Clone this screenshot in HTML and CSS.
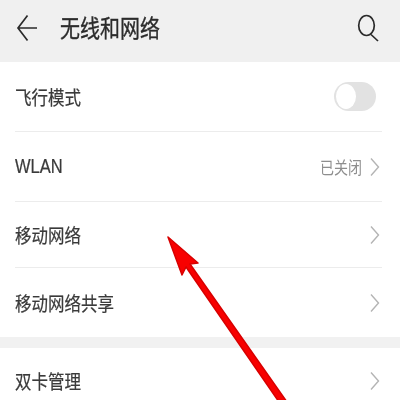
FILE: index.html
```html
<!DOCTYPE HTML>
<html>
<head>
<meta charset="UTF-8">
<title>无线和网络</title>
<link rel="stylesheet" href="styles.css">
</head>
<body>

<div class="header">
	<svg class="back-icon" width="22" height="28" viewBox="0 0 22 28">
		<path d="M11.5 1.5 L2 14 L11.5 26.5 M2 14 H21" fill="none" stroke="#2a2a2a" stroke-width="1.7"/>
	</svg>
	<h1 class="title">无线和网络</h1>
	<svg class="search-icon" width="23" height="28" viewBox="0 0 23 28">
		<ellipse cx="9.5" cy="11.5" rx="7.8" ry="10" fill="none" stroke="#2a2a2a" stroke-width="1.7"/>
		<path d="M14 20.5 L21 27" fill="none" stroke="#2a2a2a" stroke-width="1.7"/>
	</svg>
</div>

<div class="group">
	<div class="row row-first">
		<span class="label">飞行模式</span>
		<span class="switch"><span class="knob"></span></span>
	</div>
	<div class="row row-wlan">
		<span class="label">WLAN</span>
		<span class="value">已关闭</span>
		<svg class="chevron" width="10" height="20" viewBox="0 0 10 20"><path d="M1 1.5 L8.5 10 L1 18.5" fill="none" stroke="#b4b4b4" stroke-width="1.4"/></svg>
	</div>
	<div class="row row-mobile">
		<span class="label">移动网络</span>
		<svg class="chevron" width="10" height="20" viewBox="0 0 10 20"><path d="M1 1.5 L8.5 10 L1 18.5" fill="none" stroke="#b4b4b4" stroke-width="1.4"/></svg>
	</div>
	<div class="row row-share">
		<span class="label">移动网络共享</span>
		<svg class="chevron" width="10" height="20" viewBox="0 0 10 20"><path d="M1 1.5 L8.5 10 L1 18.5" fill="none" stroke="#b4b4b4" stroke-width="1.4"/></svg>
	</div>
</div>

<div class="group-gap"></div>

<div class="group">
	<div class="row row-last">
		<span class="label">双卡管理</span>
		<svg class="chevron" width="10" height="20" viewBox="0 0 10 20"><path d="M1 1.5 L8.5 10 L1 18.5" fill="none" stroke="#b4b4b4" stroke-width="1.4"/></svg>
	</div>
</div>

<!-- Red arrow drawn over the list -->
<svg class="arrow" width="400" height="400" viewBox="0 0 400 400">
	<path d="M168 237 L198 263 L190 264 L287 402 L279 402 L186 267 L182 275 Z" fill="#f80000" stroke="#d80000" stroke-width="1.5" stroke-linejoin="round"/>
</svg>

</body>
</html>
```

FILE: styles.css
```css
/* *** Layout *** */
html, body {
	margin: 0;
	height: 400px;
	overflow: hidden;
	background-color: #fff;
	font-family: "Liberation Sans", "Noto Sans CJK SC", sans-serif;
}

.header {
	display: flex;
	align-items: center;
	height: 62px;
	padding: 0 20px 7px 16px;
	box-sizing: border-box;
	background-color: #f0f0f0;
}

.group {
	padding: 0 18px 0 15px;
}

.group-gap {
	height: 11px;
	background-color: #f1f1f1;
}

.row {
	display: flex;
	align-items: center;
	border-bottom: 1px solid #ececec;
	box-sizing: border-box;
}

.row-first { height: 70px; }
.row-wlan { height: 70px; }
.row-mobile { height: 66px; }
.row-share { height: 69px; border-bottom: none; }
.row-last { height: 66px; border-bottom: none; }

/* *** Text *** */
/* The screenshot is stretched vertically, so the text is too */
.title {
	flex: 1;
	margin: 0 0 2px 22px;
	font-size: 20px;
	font-weight: normal;
	color: #2b2b2b;
	-webkit-text-stroke: 0.3px #2b2b2b;
	transform: scaleY(1.2);
	filter: blur(0.3px);
}

.label {
	flex: 1;
	font-size: 16.5px;
	color: #3a3a3a;
	-webkit-text-stroke: 0.2px #3a3a3a;
	transform: scaleY(1.2);
	filter: blur(0.3px);
}

.value {
	margin-right: 8px;
	font-size: 14px;
	color: #8e8e8e;
	transform: scaleY(1.2);
	filter: blur(0.3px);
}

/* *** Controls *** */
.switch {
	display: flex;
	align-items: center;
	width: 42px;
	height: 29px;
	margin-right: 6px;
	padding: 0 2px;
	border-radius: 15px;
	background-color: #e2e2e2;
	box-sizing: border-box;
}

.knob {
	width: 20px;
	height: 25px;
	border-radius: 50%;
	background-color: #fff;
}

.chevron {
	margin-right: 2px;
}

/* Arrow lies over the list */
.arrow {
	position: absolute;
	left: 0;
	top: 0;
}
```
